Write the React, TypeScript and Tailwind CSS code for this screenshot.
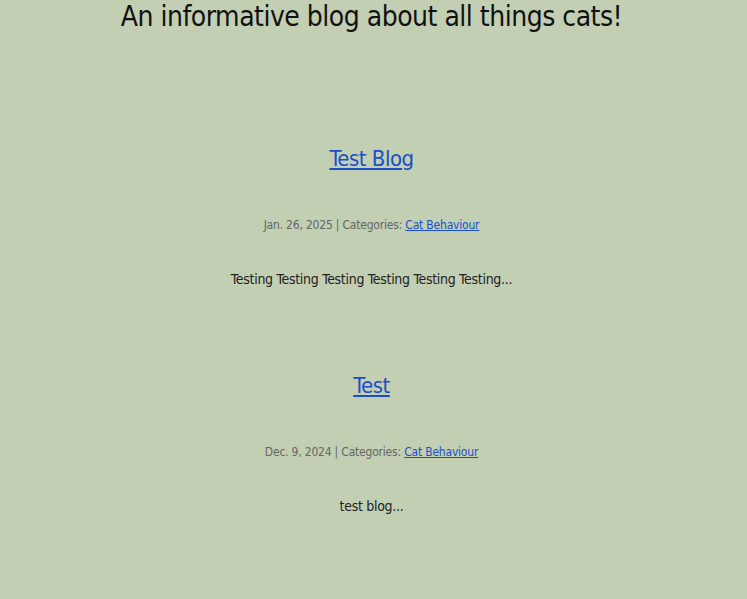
export default function App() {
  const posts = [
    { title: "Test Blog", date: "Jan. 26, 2025", excerpt: "Testing Testing Testing Testing Testing Testing..." },
    { title: "Test", date: "Dec. 9, 2024", excerpt: "test blog..." },
  ];
  return (
    <div className="min-h-[599px] w-full bg-[#c2cfb2] pr-[4px] text-center" style={{ fontFamily: '"DejaVu Sans Condensed", "DejaVu Sans", sans-serif' }}>
      <h1 className="text-[28px] leading-[34px] text-[#111] tracking-[-0.5px]">An informative blog about all things cats!</h1>
      <div className="mt-[109px] flex flex-col">
        {posts.map((p) => (
          <div key={p.title} className="h-[227px]">
            <a href="#" className="block h-[32px] text-[22px] leading-[32px] text-[#1a4fc9] underline tracking-[-0.5px]">
              {p.title}
            </a>
            <p className="mt-[42px] text-[12px] leading-[16px] text-[#666] tracking-[-0.2px]">
              {p.date} | Categories: <a href="#" className="text-[#1a4fc9] underline">Cat Behaviour</a>
            </p>
            <p className="mt-[36px] text-[14px] leading-[20px] text-[#222] tracking-[-0.3px]">{p.excerpt}</p>
          </div>
        ))}
      </div>
    </div>
  );
}
